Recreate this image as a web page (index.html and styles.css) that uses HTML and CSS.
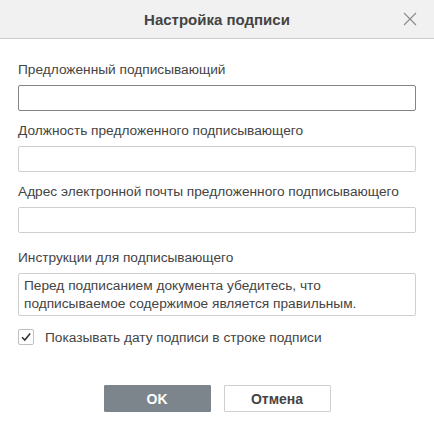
FILE: index.html
```html
<!DOCTYPE html>
<html lang="ru">
<head>
    <meta charset="UTF-8">
    <meta name="viewport" content="width=device-width, initial-scale=1.0">
    <title>Настройка подписи</title>
    <link rel="stylesheet" href="styles.css">
</head>
<body>
    <div class="dialog">
        <div class="header">
            <span></span>
            <span class="title">Настройка подписи</span>
            <span class="close">
                <svg width="14" height="14" viewBox="0 0 14 14">
                    <path d="M1 1 L13 13 M13 1 L1 13" stroke="#8a8a8a" stroke-width="1.1" fill="none"/>
                </svg>
            </span>
        </div>
        <div class="body">
            <div class="field">
                <div class="label">Предложенный подписывающий</div>
                <div class="input focused"></div>
            </div>
            <div class="field">
                <div class="label">Должность предложенного подписывающего</div>
                <div class="input"></div>
            </div>
            <div class="field">
                <div class="label">Адрес электронной почты предложенного подписывающего</div>
                <div class="input"></div>
            </div>
            <div class="field wide">
                <div class="label">Инструкции для подписывающего</div>
                <div class="textarea">Перед подписанием документа убедитесь, что подписываемое содержимое является правильным.</div>
            </div>
            <div class="check">
                <span class="box">
                    <svg width="12" height="12" viewBox="0 0 12 12">
                        <path d="M2 6.2 L4.8 9 L10.2 2.6" stroke="#333" stroke-width="1.6" fill="none"/>
                    </svg>
                </span>
                <span>Показывать дату подписи в строке подписи</span>
            </div>
        </div>
        <div class="footer">
            <div class="btn primary">OK</div>
            <div class="btn">Отмена</div>
        </div>
    </div>
</body>
</html>
```

FILE: styles.css
```css
body{
    margin:0;
    background:#fff;
    font-family:"Liberation Sans", Arial, sans-serif;
    color:#444;
}
.dialog{
    width:434px;
    height:433px;
}
.header{
    height:38px;
    background:#f1f1f1;
    border-bottom:1px solid #cbcbcb;
    display:grid;
    grid-template-columns:1fr auto 1fr;
    align-items:center;
}
.title{
    font-size:15px;
    font-weight:bold;
    color:#444;
}
.close{
    justify-self:end;
    margin-right:17px;
    display:flex;
}
.body{
    padding:23px 18px 0 18px;
}
.field{
    margin-bottom:12px;
}
.field.wide{
    margin-top:17px;
}
.label{
    font-size:13.7px;
    line-height:16px;
    margin-bottom:7px;
}
.input{
    height:24px;
    border:1px solid #cfcfcf;
    border-radius:2px;
}
.input.focused{
    border-color:#848484;
}
.textarea{
    height:36px;
    border:1px solid #cfcfcf;
    border-radius:2px;
    padding:3px 5px 2px 5px;
    font-size:13.7px;
    line-height:18px;
}
.check{
    display:flex;
    align-items:center;
    gap:11px;
    font-size:13.7px;
    margin-top:13px;
}
.box{
    width:14px;
    height:14px;
    border:1px solid #c0c0c0;
    border-radius:2px;
    display:flex;
    align-items:center;
    justify-content:center;
}
.footer{
    display:flex;
    justify-content:center;
    gap:13px;
    margin-top:40px;
}
.btn{
    width:105px;
    height:25px;
    border:1px solid #cfcfcf;
    border-radius:1px;
    display:flex;
    align-items:center;
    justify-content:center;
    font-size:14px;
    font-weight:bold;
    color:#444;
}
.btn.primary{
    background:#7d858c;
    border-color:#7d858c;
    color:#fff;
}
```
